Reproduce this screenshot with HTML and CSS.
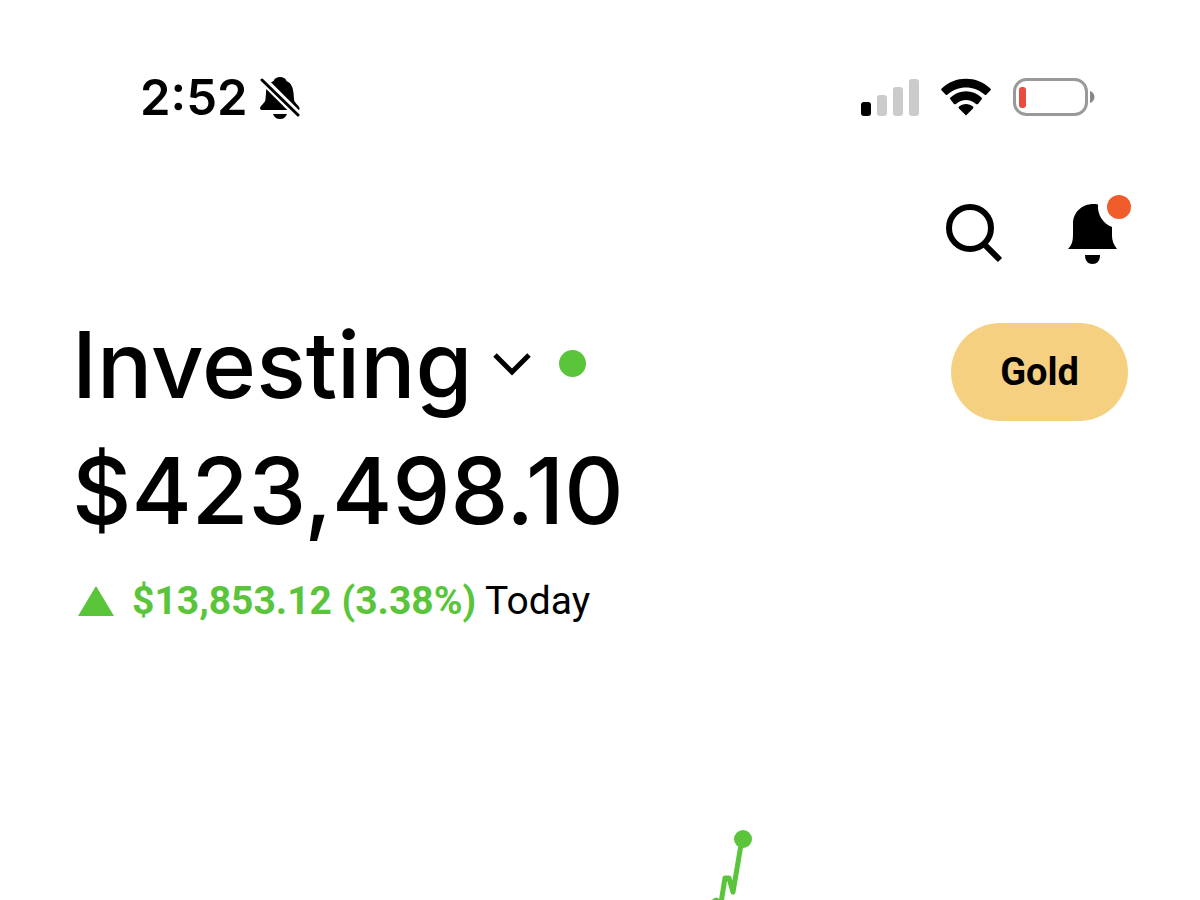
FILE: index.html
```html
<!DOCTYPE html>
<html lang="en">
<head>
    <meta charset="UTF-8">
    <meta name="viewport" content="width=device-width, initial-scale=1.0">
    <link rel="stylesheet" href="styles.css">
    <title>Investing</title>
</head>
<body>
    <div class="status-bar">
        <div class="status-left">
            <time class="clock">2:52</time>
            <svg class="icon" width="42" height="44" viewBox="0 0 42 44" aria-hidden="true">
                <path d="M20 1c-3 0-5 1-6.500 4C8 7 6 12 6 17l-.5 6c0 4-5 6-5.500 9 0 1.500 1 2 2.500 2h35c1.500 0 2.500-.5 2-2-.5-3-5.500-5-5.500-9l-.5-6c-.5-5-2-10-7-12-1-3-3.500-4-6.500-4z"/>
                <path d="M13 38h14c-1 3-3.500 5-7 5s-6-2-7-5z"/>
                <path class="slash-gap" d="M0 1l41 41"/>
                <path class="slash" d="M2 4l36 35"/>
            </svg>
        </div>
        <div class="status-right">
            <svg width="58" height="40" viewBox="0 0 58 40" aria-hidden="true">
                <rect x="0" y="24" width="10" height="14" rx="3"/>
                <rect class="off" x="16" y="17" width="10" height="21" rx="3"/>
                <rect class="off" x="32" y="9" width="10" height="29" rx="3"/>
                <rect class="off" x="48" y="1" width="10" height="37" rx="3"/>
            </svg>
            <svg width="50" height="40" viewBox="0 0 50 40" aria-hidden="true">
                <path d="M.7 10.500C14-2.500 36-2.500 49.300 10.500q1 1 0 2L45.500 16.500q-1 1-2 0C33 7 17 7 6.500 16.500q-1 1-2 0L.7 12.500q-1-1 0-2z"/>
                <path d="M9.500 19.500c9-8.500 22-8.500 31 0q1 1 0 2L37 26q-1 .5-2 0c-6-5.500-14-5.500-20 0q-1 .5-2 0l-3.500-4.500q-1-1 0-2z"/>
                <path d="M18 28.500c4-3.500 10-3.500 14 0q1 1 0 2L25 37.500l-7-7q-1-1 0-2z"/>
            </svg>
            <svg width="82" height="40" viewBox="0 0 82 40" aria-hidden="true">
                <rect class="battery" x="1.500" y="1.500" width="72" height="35" rx="12"/>
                <rect class="low" x="6" y="9" width="7" height="21" rx="3"/>
                <path class="cap" d="M77 13c6 2 6 10 0 12z"/>
            </svg>
        </div>
    </div>

    <nav class="toolbar">
        <button class="icon-button" aria-label="Search">
            <svg width="60" height="72" viewBox="0 0 60 72">
                <circle class="lens" cx="26" cy="33" r="21"/>
                <path class="handle" d="M40 49l16 16"/>
            </svg>
        </button>
        <button class="icon-button" aria-label="Notifications">
            <svg width="64" height="72" viewBox="0 0 64 72">
                <path d="M30 9.500C16 7 5 16 5 29v10c0 7-1 11-5 15h49c-3-4-5-8-5-13v-9C35 29 29 19 30 9.500z"/>
                <path d="M17 60h15c0 6-3 9-7.500 9S17 66 17 60z"/>
                <circle class="badge" cx="51" cy="12" r="12"/>
            </svg>
        </button>
    </nav>

    <main class="account">
        <div class="title-row">
            <h1>Investing</h1>
            <button class="icon-button" aria-label="Change account">
                <svg width="38" height="24" viewBox="0 0 38 24">
                    <path class="chevron" d="M2 2l17 17L36 2"/>
                </svg>
            </button>
            <span class="dot"></span>
            <button class="gold">Gold</button>
        </div>
        <p class="balance">$423,498.10</p>
        <p class="change">
            <svg width="36" height="30" viewBox="0 0 36 30" aria-hidden="true">
                <path d="M18 0l18 30H0z"/>
            </svg>
            <span><strong>$13,853.12 (3.38%)</strong> Today</span>
        </p>
    </main>

    <section class="chart">
        <svg width="100%" height="80" viewBox="0 0 1200 80" aria-label="Portfolio value today">
            <path class="line" d="M710 84l6-4 5 3 4-25h4l4 14 9-53"/>
            <circle cx="743" cy="19" r="9"/>
        </svg>
    </section>
</body>
</html>
```
FILE: styles.css
```css
* {
    box-sizing: border-box;
}

body {
    font-family: Roboto, sans-serif;
    font-size: 38px;
    background: #fff;
    color: #000;
    margin: 0;
    min-height: 100vh;
    display: flex;
    flex-direction: column;
}

svg {
    display: block;
}

h1,
.balance {
    font-family: Inter, sans-serif;
    font-size: 92px;
    font-weight: 500;
    line-height: 112px;
    margin: 0;
}

button {
    font: inherit;
    color: inherit;
    border: none;
    padding: 0;
    cursor: pointer;
}

.status-bar {
    display: flex;
    justify-content: space-between;
    align-items: center;
    padding: 72px 105px 0 140px;
}

.status-left {
    display: flex;
    align-items: center;
    gap: 12px;
}

.clock {
    font-family: Inter, sans-serif;
    font-size: 49px;
    font-weight: 600;
    line-height: 52px;
}

.slash,
.slash-gap {
    fill: none;
    stroke: #000;
    stroke-width: 3;
    stroke-linecap: round;
}

.slash-gap {
    stroke: #fff;
    stroke-width: 8;
}

.status-right {
    display: flex;
    align-items: center;
    gap: 22px;
}

.off {
    fill: #cbcbcb;
}

.battery {
    fill: none;
    stroke: #999;
    stroke-width: 3;
}

.low {
    fill: #ea4b3c;
}

.cap {
    fill: #888;
}

.toolbar {
    display: flex;
    justify-content: flex-end;
    gap: 64px;
    padding: 71px 68px 0;
}

.icon-button {
    background: none;
}

.lens,
.handle,
.chevron {
    fill: none;
    stroke: #000;
    stroke-width: 6;
}

.chevron {
    stroke-width: 5;
}

.badge {
    fill: #f15d2a;
}

.account {
    padding: 42px 72px 0;
}

.title-row {
    display: flex;
    align-items: flex-end;
}

.title-row .icon-button {
    margin: 0 0 44px 20px;
}

.dot {
    width: 27px;
    height: 27px;
    margin: 0 0 44px 28px;
    border-radius: 50%;
    background: #5ac53a;
}

.gold {
    margin-left: auto;
    padding: 26px 49px;
    border-radius: 49px;
    background: #f6d081;
    font-weight: 700;
    line-height: 46px;
}

.balance {
    margin-top: 14px;
}

.change {
    display: flex;
    align-items: center;
    gap: 18px;
    margin: 30px 0 0;
    padding-left: 6px;
    font-size: 39px;
    line-height: 48px;
}

.change svg,
.change strong {
    fill: #5ac53a;
    color: #5ac53a;
}

.chart {
    margin-top: auto;
}

.chart svg {
    fill: #5ac53a;
}

.line {
    fill: none;
    stroke: #5ac53a;
    stroke-width: 5;
    stroke-linejoin: round;
}
```
